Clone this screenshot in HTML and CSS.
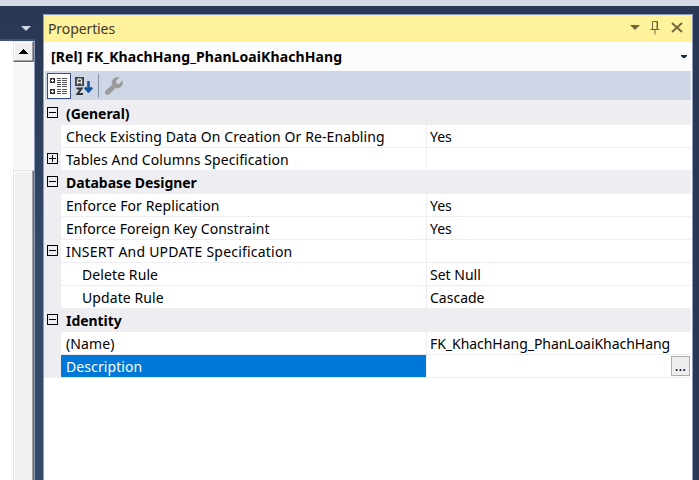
FILE: index.html
```html
<!DOCTYPE html>
<html lang="en">
<head>
<meta charset="utf-8">
<title>Properties</title>
<link rel="stylesheet" href="styles.css">
</head>
<body>
<div class="topbar"></div>
<main class="workspace">
  <aside class="document">
    <div class="doc-tabs"><svg width="10" height="5" viewBox="0 0 10 5"><path d="M0 0h10L5 5z" fill="#ced4e0"/></svg></div>
    <div class="doc-body">
      <div class="scrollbar">
        <div class="scroll-up"><svg width="9" height="5" viewBox="0 0 9 5"><path d="M4 0h1v1h1v1h1v1h1v1h1v1H0V4h1V3h1V2h1V1h1z"/></svg></div>
        <div class="track"></div>
        <div class="thumb"></div>
      </div>
    </div>
  </aside>
  <section class="panel">
    <header class="titlebar">
      <span class="title">Properties</span>
      <svg class="title-icons" width="56" height="16" viewBox="0 0 56 16" fill="none" stroke="#75643c">
        <path d="M0 5h10L5 10z" fill="#75643c" stroke="none"/>
        <path d="M22.500 9V1.500h5V9M20.500 9.500h9M25 10v4.500M27 1v8" />
        <path d="M42 3l10 9M52 3l-10 9" stroke-width="1.8"/>
      </svg>
    </header>
    <div class="object"><b>[Rel] FK_KhachHang_PhanLoaiKhachHang</b><svg width="6" height="3" viewBox="0 0 6 3"><path d="M0 0h6v1L4 3H2L0 1z" fill="#1b293e"/></svg></div>
    <div class="toolbar">
      <span class="tool selected"><svg width="20" height="20" viewBox="0 0 20 20" shape-rendering="crispEdges">
        <path d="M1 2h5v5H1zM1 13h5v5H1z" fill="#333"/><path d="M2 4.500h3M3.500 3v3M2 15.500h3M3.500 14v3" stroke="#fff"/>
        <path d="M8 2.500h4M13 2.500h5M8 4.500h4M13 4.500h5M8 6.500h4M13 6.500h5M8 8.500h4M13 8.500h5M8 10.500h4M13 10.500h5M8 13.500h4M13 13.500h5M8 15.500h4M13 15.500h5M8 17.500h4M13 17.500h5" stroke="#555"/>
      </svg></span>
      <span class="tool"><svg width="20" height="20" viewBox="0 0 20 20">
        <path d="M2 1h9v9H2z" fill="#444"/><path d="M4.500 8.500V4l1-1h2l1 1v4.500M4.500 6.500h4" fill="none" stroke="#ddd" stroke-width="1.300"/>
        <path d="M3.500 12.500h5L4.500 18h5.500" fill="none" stroke="#333" stroke-width="2"/>
        <path d="M15.500 5v10M12 11.500l3.500 3.800 3.500-3.800" fill="none" stroke="#17539b" stroke-width="2.600"/>
      </svg></span>
      <span class="separator"></span>
      <span class="tool wrench"><svg width="20" height="20" viewBox="0 0 20 20"><path d="M2 18.500a2.500 2.500 0 0 1-.2-4L8 9C6.500 4 10.500 0 15.500 1.500L12 5l.5 2.500L15 8l3.500-3.500C20 9 16 13.500 11.500 12L5.500 18q-1.500 1.500-3.500.5z" fill="#9b9b9b"/></svg></span>
    </div>
    <div class="grid">
      <div class="row category"><i class="box"></i><b>(General)</b></div>
      <div class="row"><i></i><span class="name">Check Existing Data On Creation Or Re-Enabling</span><span class="value">Yes</span></div>
      <div class="row"><i class="box plus"></i><span class="name">Tables And Columns Specification</span><span class="value"></span></div>
      <div class="row category"><i class="box"></i><b>Database Designer</b></div>
      <div class="row"><i></i><span class="name">Enforce For Replication</span><span class="value">Yes</span></div>
      <div class="row"><i></i><span class="name tight">Enforce Foreign Key Constraint</span><span class="value">Yes</span></div>
      <div class="row"><i class="box"></i><span class="name wide">INSERT And UPDATE Specification</span><span class="value"></span></div>
      <div class="row"><i></i><span class="name child">Delete Rule</span><span class="value">Set Null</span></div>
      <div class="row"><i></i><span class="name child">Update Rule</span><span class="value">Cascade</span></div>
      <div class="row category"><i class="box"></i><b>Identity</b></div>
      <div class="row"><i></i><span class="name">(Name)</span><span class="value identifier">FK_KhachHang_PhanLoaiKhachHang</span></div>
      <div class="row"><i></i><span class="name active">Description</span><span class="value"><button>...</button></span></div>
    </div>
  </section>
</main>
</body>
</html>
```
FILE: styles.css
```css
* { box-sizing: border-box; }
body { margin: 0; height: 480px; overflow: hidden; background: #293955; font: 14px/22px "Noto Sans", "Open Sans", sans-serif; color: #000; }
svg { display: block; flex: none; }
.topbar { height: 6px; background: #d6dbe9; }
.workspace { display: flex; height: 474px; background: linear-gradient(#293955, #293955 20px, #35496a 260px); border-right: 6px solid #293955; }
.document { width: 35px; display: flex; flex-direction: column; }
.doc-tabs { height: 35px; padding: 20px 0 0 21px; border-bottom: 2px solid #40547a; }
.doc-body { flex: 1; background: #fff; border-right: 1px solid #8e9bbc; padding-left: 13px; }
.scrollbar { width: 21px; height: 100%; display: flex; flex-direction: column; }
.scroll-up { height: 21px; background: #f0f0f0; border: 1px solid #e3e3e3; border-right-color: #696969; border-bottom-color: #696969; box-shadow: inset -1px -1px #a0a0a0, inset 1px 1px #fff; padding: 7px 0 0 5px; }
.track { height: 108px; background: repeating-conic-gradient(#f0f0f0 0 25%, #fff 0 50%) 0 0 / 2px 2px; }
.thumb { flex: 1; background: #f0f0f0; border: 1px solid #e3e3e3; border-right-color: #696969; border-bottom: 0; box-shadow: inset -1px 0 #a0a0a0, inset 1px 1px #fff; }
.panel { width: 650px; margin: 8px 0 0 8px; background: #fff; border: 1px solid #8e9bbc; border-bottom: 0; }
.titlebar { height: 27px; background: #fff29d; display: flex; align-items: center; justify-content: space-between; padding: 0 6px 0 4px; }
.title { color: #3f382c; letter-spacing: -.1px; }
.title-icons { margin-top: -2px; }
.object { height: 29px; background: #fcfcfc; display: flex; align-items: center; justify-content: space-between; padding: 0 5px 0 7px; }
.object b { letter-spacing: .09px; }
.category b { padding-left: 5px; line-height: 24px; letter-spacing: -.06px; }
.toolbar { height: 29px; margin: 0 1px; background: #cfd6e5; display: flex; align-items: center; padding-left: 2px; }
.tool { width: 24px; height: 26px; display: flex; align-items: center; justify-content: center; }
.selected { background: #fcfcfa; border: 1px solid #3b4f81; }
.wrench { margin-left: -1px; }
.separator { width: 1px; height: 24px; background: #8591a8; margin: 0 4px 0 3px; }
.grid { margin: 0 1px 0 0; padding-top: 2px; background: #eeeef2; }
.row { height: 23px; display: flex; }
.row > i { width: 17px; flex: none; }
.row > .box { width: 11px; height: 11px; margin: 5px 3px 0; border: 1px solid #000; background: linear-gradient(#000, #000) center / 7px 1px no-repeat; }
.row > .plus { background: linear-gradient(#000, #000) center / 7px 1px no-repeat, linear-gradient(#000, #000) center / 1px 7px no-repeat; }
.name { width: 365px; height: 22px; padding-left: 5px; background: #fff; white-space: nowrap; line-height: 24px; letter-spacing: .09px; }
.tight { letter-spacing: .03px; }
.wide { letter-spacing: .21px; }
.child { padding-left: 21px; }
.value { flex: 1; height: 22px; margin-left: 1px; padding-left: 3px; background: #fff; white-space: nowrap; display: flex; line-height: 24px; }
.identifier { letter-spacing: -.04px; }
.active { background: #0078d7; color: #fff; }
button { width: 19px; height: 20px; margin: 1px 1px 0 auto; padding: 0; border: 1px solid #adadad; background: #eee; font: 14px/14px "Noto Sans", sans-serif; color: #000; }
```
